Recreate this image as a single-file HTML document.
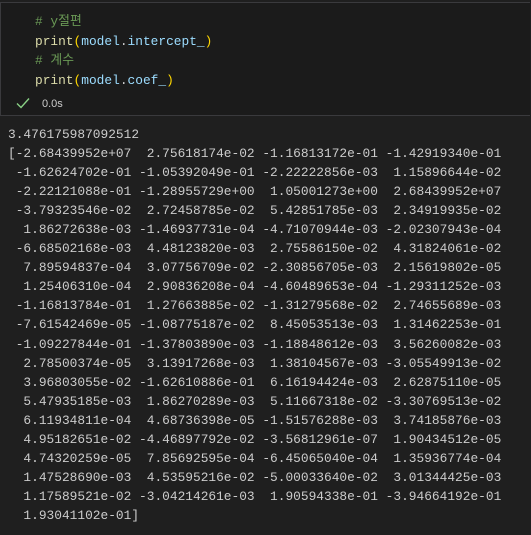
<!DOCTYPE html><html><head><style>
body{margin:0;width:531px;height:535px;background:#1f1f1f;overflow:hidden;font-family:"Liberation Mono",monospace;}
.cell{position:absolute;left:0;top:2px;width:529px;height:112px;background:#1b1b1b;border:1px solid #3a3a3d;border-right:none;}
.code{position:absolute;left:35px;top:12px;font-size:12.85px;line-height:19.5px;color:#dcdcaa;white-space:pre;}
.c{color:#6a9955;font-family:"Liberation Mono","Noto Sans CJK KR",monospace}
.p{color:#ffd700}.v{color:#9cdcfe}.f{color:#dcdcaa}
.chk{position:absolute;left:16px;top:97px;}
.t{position:absolute;left:42px;top:98px;font-family:"Liberation Sans",sans-serif;font-size:11px;color:#ccc}
.out{position:absolute;left:8px;top:125px;font-size:12.85px;line-height:19.05px;color:#cccccc;white-space:pre;}
</style></head><body>
<div class="cell"></div>
<div class="code"><span class="c"># y절편</span>
<span class="f">print</span><span class="p">(</span><span class="v">model</span><span style="color:#ccc">.</span><span class="v">intercept_</span><span class="p">)</span>
<span class="c"># 계수</span>
<span class="f">print</span><span class="p">(</span><span class="v">model</span><span style="color:#ccc">.</span><span class="v">coef_</span><span class="p">)</span></div>
<svg class="chk" width="14" height="12" viewBox="0 0 14 12"><path d="M1 6.5 L5 10.5 L13 1.5" stroke="#89d185" stroke-width="1.4" fill="none"/></svg>
<div class="t">0.0s</div>
<div class="out">3.476175987092512
[-2.68439952e+07  2.75618174e-02 -1.16813172e-01 -1.42919340e-01
 -1.62624702e-01 -1.05392049e-01 -2.22222856e-03  1.15896644e-02
 -2.22121088e-01 -1.28955729e+00  1.05001273e+00  2.68439952e+07
 -3.79323546e-02  2.72458785e-02  5.42851785e-03  2.34919935e-02
  1.86272638e-03 -1.46937731e-04 -4.71070944e-03 -2.02307943e-04
 -6.68502168e-03  4.48123820e-03  2.75586150e-02  4.31824061e-02
  7.89594837e-04  3.07756709e-02 -2.30856705e-03  2.15619802e-05
  1.25406310e-04  2.90836208e-04 -4.60489653e-04 -1.29311252e-03
 -1.16813784e-01  1.27663885e-02 -1.31279568e-02  2.74655689e-03
 -7.61542469e-05 -1.08775187e-02  8.45053513e-03  1.31462253e-01
 -1.09227844e-01 -1.37803890e-03 -1.18848612e-03  3.56260082e-03
  2.78500374e-05  3.13917268e-03  1.38104567e-03 -3.05549913e-02
  3.96803055e-02 -1.62610886e-01  6.16194424e-03  2.62875110e-05
  5.47935185e-03  1.86270289e-03  5.11667318e-02 -3.30769513e-02
  6.11934811e-04  4.68736398e-05 -1.51576288e-03  3.74185876e-03
  4.95182651e-02 -4.46897792e-02 -3.56812961e-07  1.90434512e-05
  4.74320259e-05  7.85692595e-04 -6.45065040e-04  1.35936774e-04
  1.47528690e-03  4.53595216e-02 -5.00033640e-02  3.01344425e-03
  1.17589521e-02 -3.04214261e-03  1.90594338e-01 -3.94664192e-01
  1.93041102e-01]</div>
</body></html>
